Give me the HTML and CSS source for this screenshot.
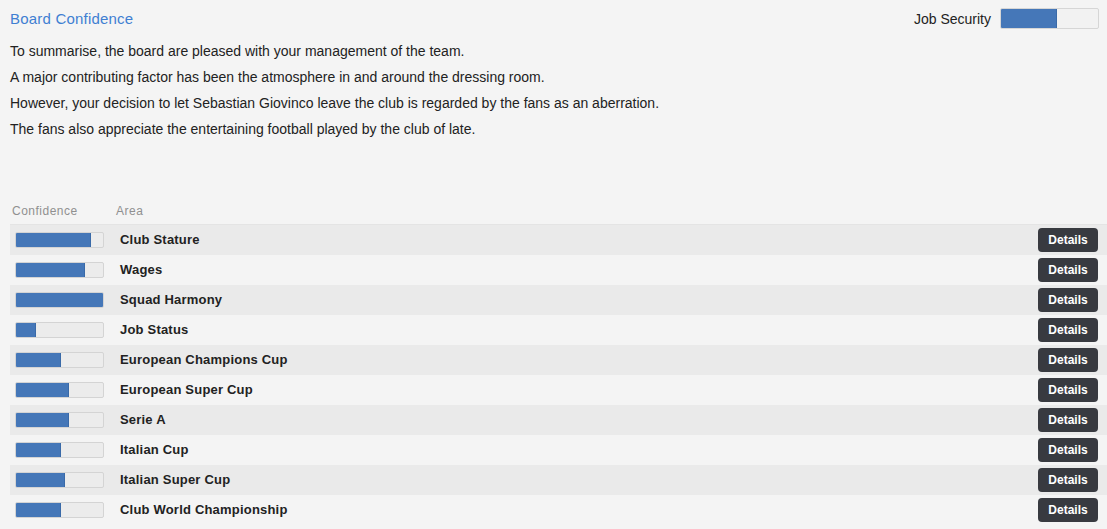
FILE: index.html
```html
<!DOCTYPE html>
<html>
<head>
<meta charset="utf-8">
<link rel="stylesheet" href="styles.css">
</head>
<body>
<div class="page">
  <div class="header">
    <h1 class="title">Board Confidence</h1>
    <div class="security">
      <span class="security-label">Job Security</span>
      <div class="sec-bar"><div class="sec-fill" style="width:56px"></div></div>
    </div>
  </div>
  <div class="summary">
    <p>To summarise, the board are pleased with your management of the team.</p>
    <p>A major contributing factor has been the atmosphere in and around the dressing room.</p>
    <p>However, your decision to let Sebastian Giovinco leave the club is regarded by the fans as an aberration.</p>
    <p>The fans also appreciate the entertaining football played by the club of late.</p>
  </div>
  <div class="table">
    <div class="thead">
      <span class="th-conf">Confidence</span>
      <span class="th-area">Area</span>
    </div>
    <div class="row shaded"><div class="bar"><div class="fill" style="width:75px"></div></div><span class="area">Club Stature</span><button class="btn">Details</button></div>
    <div class="row"><div class="bar"><div class="fill" style="width:69px"></div></div><span class="area">Wages</span><button class="btn">Details</button></div>
    <div class="row shaded"><div class="bar"><div class="fill" style="width:89px"></div></div><span class="area">Squad Harmony</span><button class="btn">Details</button></div>
    <div class="row"><div class="bar"><div class="fill" style="width:20px"></div></div><span class="area">Job Status</span><button class="btn">Details</button></div>
    <div class="row shaded"><div class="bar"><div class="fill" style="width:45px"></div></div><span class="area">European Champions Cup</span><button class="btn">Details</button></div>
    <div class="row"><div class="bar"><div class="fill" style="width:53px"></div></div><span class="area">European Super Cup</span><button class="btn">Details</button></div>
    <div class="row shaded"><div class="bar"><div class="fill" style="width:53px"></div></div><span class="area">Serie A</span><button class="btn">Details</button></div>
    <div class="row"><div class="bar"><div class="fill" style="width:45px"></div></div><span class="area">Italian Cup</span><button class="btn">Details</button></div>
    <div class="row shaded"><div class="bar"><div class="fill" style="width:49px"></div></div><span class="area">Italian Super Cup</span><button class="btn">Details</button></div>
    <div class="row"><div class="bar"><div class="fill" style="width:45px"></div></div><span class="area">Club World Championship</span><button class="btn">Details</button></div>
  </div>
</div>
</body>
</html>
```
FILE: styles.css
```css
html, body {
  margin: 0;
  padding: 0;
  background: #f4f4f4;
  font-family: "Liberation Sans", Arial, sans-serif;
  color: #222;
}
.page {
  padding: 0 8px 0 10px;
}
.header {
  display: flex;
  justify-content: space-between;
  align-items: center;
  height: 36px;
}
.title {
  margin: 0;
  font-size: 15px;
  letter-spacing: 0.2px;
  font-weight: normal;
  color: #3f7fd2;
}
.security {
  display: flex;
  align-items: center;
  gap: 9px;
  margin-top: 1px;
}
.security-label {
  font-size: 14px;
  color: #222;
}
.sec-bar {
  width: 97px;
  height: 19px;
  border: 1px solid #d6d6d6;
  border-radius: 2px;
  background: #f2f2f2;
  overflow: hidden;
}
.sec-fill {
  height: 100%;
  background: #4577b8;
  border-right: 1px solid #3a6aa8;
  box-sizing: border-box;
}
.summary {
  padding-top: 2px;
  height: 164px;
}
.summary p {
  margin: 0;
  font-size: 14px;
  line-height: 26px;
}
.thead {
  display: flex;
  font-size: 12px;
  letter-spacing: 0.5px;
  color: #909090;
  height: 23px;
  align-items: center;
  border-bottom: 1px solid #e4e4e4;
  box-sizing: border-box;
  padding-bottom: 5px;
}
.th-conf {
  width: 104px;
  padding-left: 2px;
}
.table {
  margin-right: -8px;
}
.row {
  display: flex;
  align-items: center;
  height: 30px;
  padding-right: 9px;
}
.row.shaded {
  background: #eaeaea;
}
.bar {
  width: 87px;
  height: 14px;
  margin-left: 5px;
  border: 1px solid #d4d4d4;
  border-radius: 2px;
  background: #ececec;
  overflow: hidden;
  flex: none;
}
.fill {
  height: 100%;
  background: #4577b8;
  border-right: 1px solid #3a6aa8;
  box-sizing: border-box;
}
.area {
  margin-left: 16px;
  font-size: 13px;
  letter-spacing: 0.2px;
  font-weight: bold;
  color: #222;
  flex: 1;
  padding-bottom: 2px;
}
.btn {
  width: 60px;
  height: 24px;
  border: none;
  border-radius: 4px;
  background: #383a40;
  color: #fff;
  font-family: "Liberation Sans", Arial, sans-serif;
  font-size: 12px;
  font-weight: bold;
  padding: 0;
}
```
